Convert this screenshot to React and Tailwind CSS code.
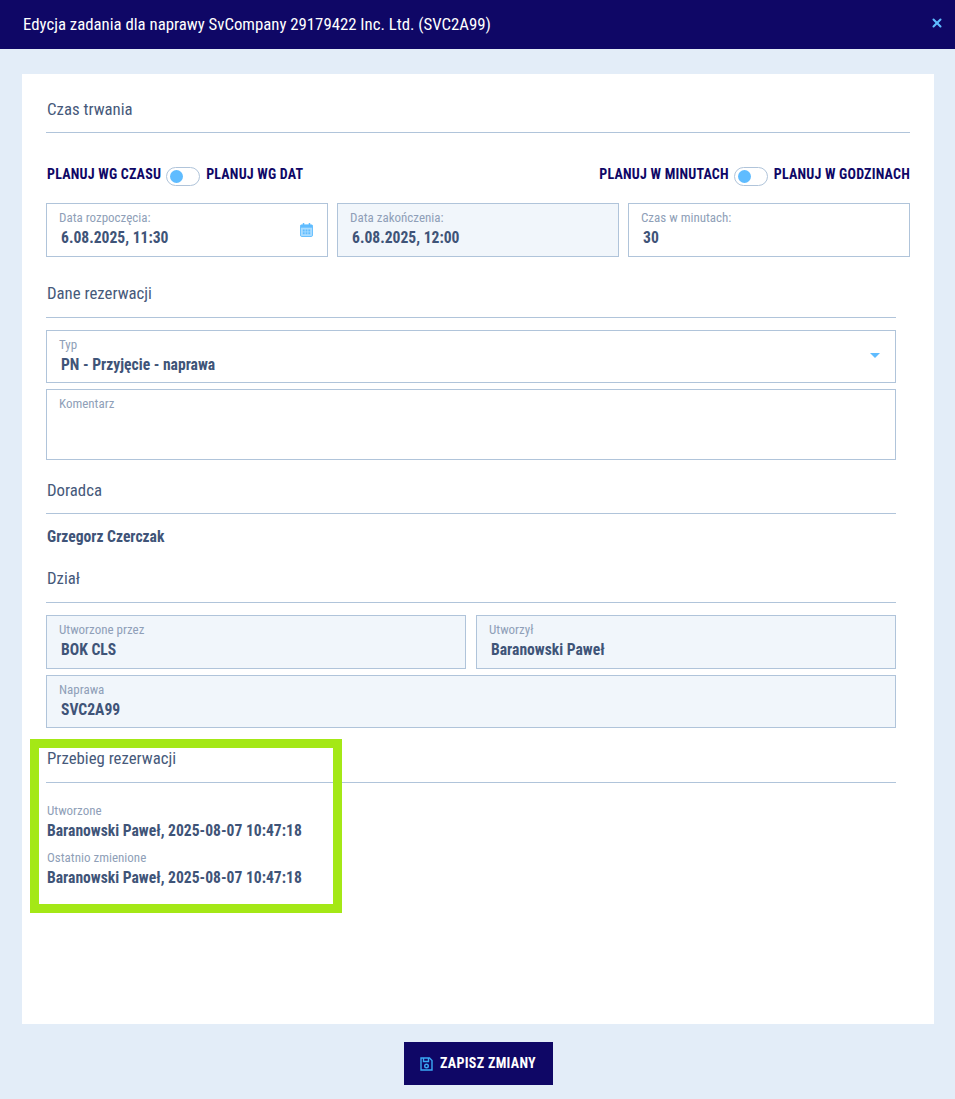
import React from 'react';
import { X } from 'lucide-react';

const font = { fontFamily: 'Roboto, sans-serif' };

const SectionTitle = ({ children, className = '' }) => (
  <div className={`border-b border-[#b0c4da] pl-px text-[16.8px] leading-[20px] text-[#46597a] [font-stretch:75%] ${className}`}>
    {children}
  </div>
);

const Field = ({ label, value, muted, className = '', children }) => (
  <div className={`relative border border-[#b0c4da] pt-[5px] pl-3 ${muted ? 'bg-[#f1f6fb]' : 'bg-white'} ${className}`}>
    <div className="mb-px text-[13px] leading-[17px] text-[#8f9fb8] [font-stretch:75%]">{label}</div>
    <div className="pl-[2px] text-[15.6px] leading-[22px] font-bold text-[#3f5478] [font-stretch:75%]">{value}</div>
    {children}
  </div>
);

const Toggle = () => (
  <div className="flex h-[19px] w-[34px] items-center rounded-full border border-[#b0c4da] bg-white pl-[3px]">
    <div className="h-[13px] w-[13px] rounded-full bg-[#5fbcff]" />
  </div>
);

const ToggleRow = ({ left, right }) => (
  <div className="flex items-center gap-[6px] pl-px text-[14px] font-bold tracking-[0.2px] text-[#0f0766] [font-stretch:75%]">
    <span className="-mt-[5px] -mr-px">{left}</span>
    <Toggle />
    <span className="-mt-[5px]">{right}</span>
  </div>
);

const CalendarIcon = () => (
  <svg width="13" height="14" viewBox="0 0 14 15" className="absolute top-[19px] right-[14px]">
    <rect x="0.5" y="2" width="13" height="12.5" rx="1.5" fill="#a9dcff" stroke="#5fbcff" />
    <rect x="0.5" y="2" width="13" height="3" fill="#5fbcff" />
    <rect x="3" y="0" width="1.6" height="3" fill="#5fbcff" />
    <rect x="9.4" y="0" width="1.6" height="3" fill="#5fbcff" />
    <path d="M3 7h2v2H3zM6 7h2v2H6zM9 7h2v2H9zM3 10h2v2H3zM6 10h2v2H6zM9 10h2v2H9z" fill="#5fbcff" />
  </svg>
);

const SaveIcon = () => (
  <svg width="13" height="14" viewBox="0 0 13 14" fill="none" stroke="#3aa9f5" strokeWidth="1.4">
    <path d="M1 1h8.5L12 3.5V13H1z" />
    <path d="M3.5 1v3.5h5V1" />
    <circle cx="6.5" cy="9" r="1.8" />
  </svg>
);

export default function App() {
  return (
    <div style={font} className="relative flex h-[1099px] w-[955px] flex-col bg-[#e3edf8]">
      {/* Header */}
      <header className="flex h-[49px] shrink-0 items-center justify-between bg-[#0f0766] pr-[11px] pl-[23px]">
        <h1 className="text-[16.8px] font-normal text-white [font-stretch:75%]">
          Edycja zadania dla naprawy SvCompany 29179422 Inc. Ltd. (SVC2A99)
        </h1>
        <X size={14} strokeWidth={3.5} className="-mt-[4px] text-[#5fbcff]" />
      </header>

      {/* Card */}
      <main className="mt-[25px] ml-[22px] h-[950px] w-[912px] bg-white px-[24px] pt-[25px]">
        <SectionTitle className="h-[34px]">Czas trwania</SectionTitle>

        <div className="mt-[34px] flex items-center justify-between">
          <ToggleRow left="PLANUJ WG CZASU" right="PLANUJ WG DAT" />
          <ToggleRow left="PLANUJ W MINUTACH" right="PLANUJ W GODZINACH" />
        </div>

        <div className="mt-[17px] grid grid-cols-3 gap-[9px]">
          <Field label="Data rozpoczęcia:" value="6.08.2025, 11:30" className="h-[54px]">
            <CalendarIcon />
          </Field>
          <Field label="Data zakończenia:" value="6.08.2025, 12:00" muted className="h-[54px]" />
          <Field label="Czas w minutach:" value="30" className="h-[54px]" />
        </div>

        <div className="mr-[14px]">
          <SectionTitle className="mt-[26px] h-[35px]">Dane rezerwacji</SectionTitle>

          <Field label="Typ" value="PN - Przyjęcie - naprawa" className="mt-[12px] h-[53px]">
            <div className="absolute top-[22px] right-[15px] h-0 w-0 border-x-[5px] border-t-[5px] border-x-transparent border-t-[#5fbcff]" />
          </Field>
          <Field label="Komentarz" value="" className="mt-[6px] h-[71px]" />

          <SectionTitle className="mt-[20px] h-[34px]">Doradca</SectionTitle>
          <div className="mt-[13px] pl-px text-[15.6px] leading-[20px] font-bold text-[#3f5478] [font-stretch:75%]">Grzegorz Czerczak</div>

          <SectionTitle className="mt-[21px] h-[35px]">Dział</SectionTitle>

          <div className="mt-[12px] grid grid-cols-2 gap-[10px]">
            <Field label="Utworzone przez" value="BOK CLS" muted className="h-[54px]" />
            <Field label="Utworzył" value="Baranowski Paweł" muted className="h-[54px]" />
          </div>
          <Field label="Naprawa" value="SVC2A99" muted className="mt-[6px] h-[53px]" />

          <SectionTitle className="mt-[20px] h-[35px]">Przebieg rezerwacji</SectionTitle>

          <div className="mt-[20px] pl-px text-[13px] leading-[16px] text-[#8f9fb8] [font-stretch:75%]">Utworzone</div>
          <div className="mt-[1px] pl-px text-[15.6px] leading-[22px] font-bold text-[#3f5478] [font-stretch:75%]">Baranowski Paweł, 2025-08-07 10:47:18</div>
          <div className="mt-[8px] pl-px text-[13px] leading-[16px] text-[#8f9fb8] [font-stretch:75%]">Ostatnio zmienione</div>
          <div className="mt-[1px] pl-px text-[15.6px] leading-[22px] font-bold text-[#3f5478] [font-stretch:75%]">Baranowski Paweł, 2025-08-07 10:47:18</div>
        </div>
      </main>

      {/* Footer */}
      <footer className="mt-[18px] ml-px flex justify-center">
        <button className="flex h-[43px] w-[149px] items-center justify-center gap-[7px] bg-[#0f0766] text-[14px] font-bold tracking-[0.3px] text-white [font-stretch:75%]">
          <SaveIcon />
          ZAPISZ ZMIANY
        </button>
      </footer>

      {/* Green highlight over the reservation history */}
      <div className="pointer-events-none absolute top-[739px] left-[30px] h-[174px] w-[312px] border-[9px] border-[#a4e816]" />
    </div>
  );
}
